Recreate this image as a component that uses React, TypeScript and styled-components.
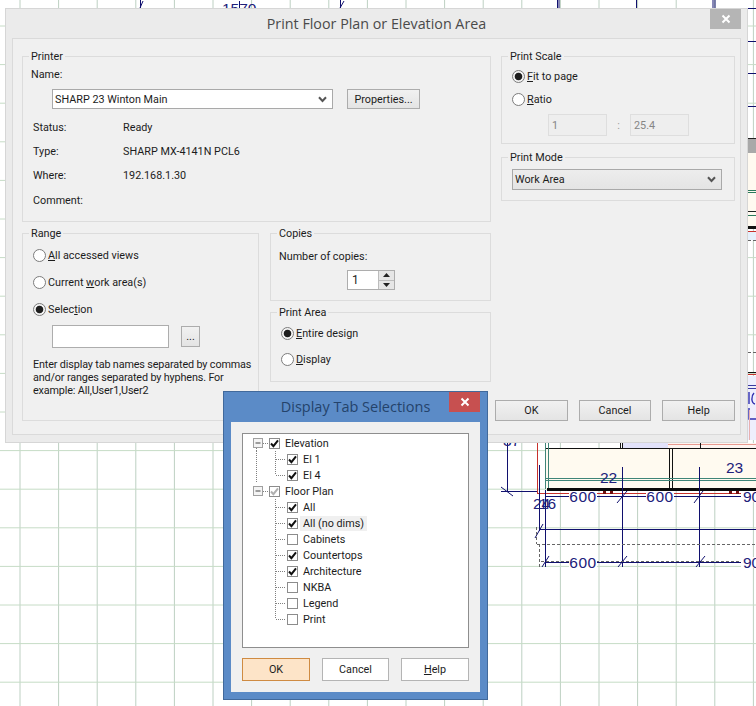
import React from 'react';
import styled, { createGlobalStyle } from 'styled-components';

const GlobalStyle = createGlobalStyle`
  html, body {
    margin: 0;
    padding: 0;
    background: #fff;
    overflow: hidden;
  }
  * {
    box-sizing: border-box;
  }
`;

const UI_FONT = `Roboto, "Liberation Sans", sans-serif`;
const CAD_FONT = `"Liberation Sans", Arial, sans-serif`;
const TITLE_FONT = `"Open Sans", "Noto Sans", sans-serif`;

const Desktop = styled.div`
  position: relative;
  width: 756px;
  height: 706px;
  overflow: hidden;
  background: #fff;
  font-family: ${UI_FONT};
  font-size: 10.8px;
  color: #1c1c1c;
`;

const Drawing = styled.svg`
  position: absolute;
  left: 0;
  top: 0;
`;

/* ---- windows ---- */

const PrintWindow = styled.div`
  position: absolute;
  left: 5px;
  top: 8px;
  width: 743px;
  height: 435px;
  display: flex;
  flex-direction: column;
  background: #ebebeb;
  border: 1px solid #d6d6d6;
  padding: 0 6px 7px;
`;

const TitleBar = styled.div<{ $height: number }>`
  position: relative;
  flex: none;
  height: ${(p) => p.$height}px;
  display: flex;
  align-items: center;
  justify-content: center;
`;

const PrintTitle = styled.div`
  font-family: ${TITLE_FONT};
  font-size: 14.3px;
  color: #4a4a4a;
`;

const CloseButton = styled.div<{ $bg: string }>`
  position: absolute;
  right: 0;
  top: 0;
  width: 31px;
  height: 20px;
  display: flex;
  align-items: center;
  justify-content: center;
  background: ${(p) => p.$bg};
`;

const PrintBody = styled.div`
  flex: 1;
  display: flex;
  gap: 10px;
  background: #f0f0f0;
  border: 1px solid #dadada;
  padding: 10px 5px 13px 9px;
`;

const LeftColumn = styled.div`
  width: 470px;
  display: flex;
  flex-direction: column;
  gap: 4px;
`;

const RightColumn = styled.div`
  width: 234px;
  display: flex;
  flex-direction: column;
  gap: 6px;
`;

const LowerRow = styled.div`
  display: flex;
  gap: 11px;
`;

const Stack = styled.div`
  flex: 1;
  display: flex;
  flex-direction: column;
  gap: 4px;
`;

const Group = styled.fieldset<{ $height: number; $width?: number }>`
  margin: 0;
  padding: 0 8px;
  min-width: 0;
  height: ${(p) => p.$height}px;
  width: ${(p) => (p.$width ? `${p.$width}px` : 'auto')};
  border: 1px solid #dcdcdc;
`;

const GroupLabel = styled.legend`
  margin-left: -2px;
  padding: 0 2px;
  height: 14px;
  line-height: 16px;
`;

/* ---- printer group ---- */

const NameLabel = styled.div`
  margin-top: 5px;
  height: 14px;
  line-height: 14px;
`;

const NameRow = styled.div`
  margin: 7px 0 0 21px;
  display: flex;
  gap: 14px;
`;

const Select = styled.div<{ $width: number; $height: number; $flat?: boolean }>`
  width: ${(p) => p.$width}px;
  height: ${(p) => p.$height}px;
  display: flex;
  align-items: center;
  justify-content: space-between;
  padding: 0 5px 0 2px;
  background: ${(p) => (p.$flat ? 'linear-gradient(#ededed, #e4e4e4)' : '#fff')};
  border: 1px solid #a9a9a9;
  white-space: nowrap;
`;

const WinButton = styled.button<{ $width: number; $height: number; $look?: 'plain' | 'default' }>`
  width: ${(p) => p.$width}px;
  height: ${(p) => p.$height}px;
  padding: 0;
  font: inherit;
  color: inherit;
  border: 1px solid ${(p) => (p.$look === 'default' ? '#cf8b42' : p.$look === 'plain' ? '#b4b4b4' : '#acacac')};
  background: ${(p) =>
    p.$look === 'default' ? '#fde4c8' : p.$look === 'plain' ? '#fff' : 'linear-gradient(#f1f1f1, #e4e4e4)'};
`;

const InfoGrid = styled.dl`
  margin: 6px 0 0 2px;
  display: grid;
  grid-template-columns: 90px 1fr;
  grid-auto-rows: 24.3px;
  align-items: center;
`;

const InfoTerm = styled.dt`
  margin: 0;
`;

const InfoValue = styled.dd`
  margin: 0;
`;

/* ---- radios ---- */

const RadioList = styled.div<{ $top: number; $gap: number }>`
  margin: ${(p) => p.$top}px 0 0 2px;
  display: flex;
  flex-direction: column;
  gap: ${(p) => p.$gap}px;
`;

const RadioRow = styled.div`
  height: 20px;
  display: flex;
  align-items: center;
  gap: 2px;
`;

const RadioCircle = styled.span<{ $on?: boolean }>`
  flex: none;
  width: 13px;
  height: 13px;
  border-radius: 50%;
  border: 1px solid #7c7c7c;
  background: ${(p) => (p.$on ? 'radial-gradient(circle, #1e1e1e 0 3.4px, #f4f4f4 4.2px)' : '#fff')};
`;

const Radio = ({ on, children }: { on?: boolean; children: React.ReactNode }) => (
  <RadioRow>
    <RadioCircle $on={on} />
    <span>{children}</span>
  </RadioRow>
);

const Mnemonic = styled.u`
  text-underline-offset: 1px;
`;

/* ---- range group ---- */

const SelectionRow = styled.div`
  margin: 6px 0 0 21px;
  display: flex;
  align-items: center;
  gap: 12px;
`;

const TextBox = styled.div<{ $width: number; $height: number; $disabled?: boolean }>`
  width: ${(p) => p.$width}px;
  height: ${(p) => p.$height}px;
  display: flex;
  align-items: center;
  padding-left: 3px;
  background: ${(p) => (p.$disabled ? '#eeeeee' : '#fff')};
  border: 1px solid ${(p) => (p.$disabled ? '#dedede' : '#adadad')};
  color: ${(p) => (p.$disabled ? '#858585' : 'inherit')};
`;

const Hint = styled.p`
  margin: 10px 0 0 2px;
  line-height: 13px;
  letter-spacing: -0.14px;
  white-space: nowrap;
`;

/* ---- copies ---- */

const CopiesLabel = styled.div`
  margin-top: 10px;
  height: 14px;
  line-height: 14px;
`;

const Spinner = styled.div`
  margin: 6px 0 0 68px;
  width: 48px;
  height: 20px;
  display: flex;
  background: #fff;
  border: 1px solid #adadad;
`;

const SpinValue = styled.div`
  flex: 1;
  padding-left: 4px;
  line-height: 18px;
  font-size: 12px;
`;

const SpinArrows = styled.div`
  width: 16px;
  display: flex;
  flex-direction: column;
  background: #e6e6e6;
  border-left: 1px solid #bcbcbc;
`;

const SpinHalf = styled.div`
  flex: 1;
  display: flex;
  align-items: center;
  justify-content: center;
  & + & {
    border-top: 1px solid #bcbcbc;
  }
`;

/* ---- print scale ---- */

const RatioRow = styled.div`
  margin: 5px 0 0 38px;
  display: flex;
  align-items: center;
  width: 141px;
  justify-content: space-between;
`;

const RatioColon = styled.span`
  color: #9a9a9a;
`;

const ModeRow = styled.div`
  margin-top: 5px;
  margin-left: 2px;
`;

const ActionRow = styled.div`
  margin: auto 0 0 -6px;
  display: flex;
  gap: 11px;
`;

/* ---- tab selection window ---- */

const TabWindow = styled.div`
  position: absolute;
  left: 223px;
  top: 391px;
  width: 265px;
  height: 309px;
  display: flex;
  flex-direction: column;
  background: #5b8bc7;
  border: 1px solid #41699b;
  padding: 0 7px 7px;
`;

const TabTitle = styled.div`
  font-family: ${TITLE_FONT};
  font-size: 14.5px;
  color: #24436b;
  padding-bottom: 1px;
`;

const TabBody = styled.div`
  flex: 1;
  display: flex;
  flex-direction: column;
  gap: 10px;
  background: #f0f0f0;
  padding: 11px;
`;

const TreeBox = styled.div`
  flex: 1;
  padding: 1px 0 0 10px;
  background: #fff;
  border: 1px solid #8e8e8e;
`;

const TreeRow = styled.div`
  height: 16px;
  display: flex;
  align-items: center;
`;

const Guides = styled.svg`
  flex: none;
  display: block;
`;

const CheckFrame = styled.span`
  flex: none;
  width: 11px;
  height: 11px;
  display: flex;
  align-items: center;
  justify-content: center;
  background: #fff;
  border: 1px solid #8c8c8c;
`;

const TreeText = styled.span<{ $hot?: boolean }>`
  margin-left: 2px;
  padding: 1px 3px;
  background: ${(p) => (p.$hot ? '#f0f0f0' : 'transparent')};
  white-space: nowrap;
`;

const TabActions = styled.div`
  display: flex;
  justify-content: space-between;
`;

/* ---- small drawings ---- */

const CrossIcon = () => (
  <svg width="10" height="10" viewBox="0 0 10 10">
    <path d="M1.5 1.5l7 7M8.5 1.5l-7 7" stroke="#fff" strokeWidth="2" />
  </svg>
);

const Chevron = () => (
  <svg width="9" height="7" viewBox="0 0 9 7">
    <path d="M1 1.2l3.5 3.8L8 1.2" fill="none" stroke="#555" strokeWidth="2" />
  </svg>
);

const SpinArrow = ({ up }: { up?: boolean }) => (
  <svg width="7" height="4" viewBox="0 0 7 4">
    <path d={up ? 'M3.5 0L7 4H0z' : 'M0 0h7L3.5 4z'} fill="#222" />
  </svg>
);

const Check = ({ disabled }: { disabled?: boolean }) => (
  <svg width="9" height="9" viewBox="0 0 9 9">
    <path d="M1 4.5l2.4 2.6L8 1.4" fill="none" stroke={disabled ? '#b0b0b0' : '#111'} strokeWidth="2" />
  </svg>
);

const dots = { stroke: '#808080', strokeDasharray: '1 1', fill: 'none' };

const ParentGuide = ({ last }: { last?: boolean }) => (
  <Guides width="16" height="16">
    <rect x="0.5" y="3.5" width="9" height="9" fill="#f4f4f4" stroke="#a0a0a0" />
    <path d="M2.5 8h5" stroke="#444" />
    <path d="M10 8.5h5" {...dots} />
    {!last && <path d="M3.5 13v3" {...dots} />}
  </Guides>
);

const ChildGuide = ({ trunk, end }: { trunk?: boolean; end?: boolean }) => (
  <Guides width="34" height="16">
    {trunk && <path d="M3.5 0v16" {...dots} />}
    <path d={end ? 'M22.5 0v8' : 'M22.5 0v16'} {...dots} />
    <path d="M23 8.5h9" {...dots} />
  </Guides>
);

/* ---- background CAD sheet ---- */

const NAVY = '#10106e';
const gridXs = Array.from({ length: 20 }, (_, i) => 20 + i * 38.6);
const gridYs = Array.from({ length: 18 }, (_, i) => 26 + i * 38.6);

const Dim = styled.text`
  font-family: ${CAD_FONT};
  font-size: 15.5px;
  fill: #20207a;
`;

const Dim600 = ({ x, y }: { x: number; y: number }) => (
  <>
    <rect x={x - 14} y={y - 5} width={28} height={11} fill="#fff" />
    <Dim x={x} y={y + 6} textAnchor="middle" letterSpacing="0.5">600</Dim>
  </>
);

const CadSheet = () => (
  <Drawing width="756" height="706">
    {gridXs.map((x) => (
      <line key={x} x1={x} x2={x} y1={0} y2={706} stroke="#bdd0c2" />
    ))}
    {gridYs.map((y) => (
      <line key={y} x1={0} x2={756} y1={y} y2={y} stroke="#c6dcc6" />
    ))}

    {/* stubs above the print window */}
    <path d="M140.5 0v8M140 8l3-7M340.5 0v8M340 8l4-7M557.5 0v8M559 0v8M636.5 0v8M713 0v8M715 0v8M239.5 1v7" stroke={NAVY} />
    <Dim x={222} y={14} fontSize="15">1570</Dim>

    {/* right edge behind the window */}
    <path d="M748 8.5h8M748 41.5h8M748 73.5h8M748 106.5h8" stroke={NAVY} />
    <rect x="748" y="138" width="8" height="15" fill="#a9a9a9" />
    <path d="M748 138.5h8" stroke="#222" />
    <rect x="748" y="153" width="8" height="73" fill="#fffaf0" />
    <path d="M748 190.5h8M748 192.5h8M748 215.5h8" stroke="#2b7a5c" />
    <path d="M748 211.5h8" stroke="#222" />
    <rect x="748" y="226" width="8" height="3" fill="#111" />
    <path d="M748 231.5h8" stroke="#c8322c" />
    <rect x="748" y="232" width="8" height="8" fill="#e6f0fb" />
    <path d="M748 240.5h8M748 352.5h8" stroke="#666" strokeDasharray="3 2" />
    <rect x="748" y="376" width="8" height="64" fill="#eeeefc" />
    <path d="M748 372.5h8" stroke="#111" />
    <path d="M748 374.5h8" stroke="#c8322c" />
    <path d="M748 385.5h8M748 388.5h8" stroke="#3a3aa0" />
    <path d="M749 392v12M754 393c-3 3-3 10 1 11M749 408v11h7" fill="none" stroke="#3030b0" strokeWidth="1.4" />
    <path d="M749.5 410v30" stroke="#e8b0b0" />

    {/* cabinet run */}
    <rect x="622" y="443" width="46" height="5" fill="#e2e2fa" />
    <rect x="668" y="443" width="88" height="5" fill="#fdf4f0" />
    <path d="M668 444.5h88" stroke="#e89a90" />
    <rect x="546" y="448" width="210" height="41" fill="#fffaf0" />
    <path d="M546 448.5h210" stroke="#111" />
    <path d="M620.5 443v5M622.5 443v5M700.5 443v5M669.5 448v41M672.5 448v41" stroke="#111" />
    <path d="M546 478.5h210M546 480.5h210" stroke="#3f8578" />
    <path d="M545.5 443v46M548.5 443v46" stroke="#3f8578" />
    <path d="M537.5 443v50M537 493.5h219" stroke="#c8322c" />
    <rect x="547" y="488" width="209" height="3" fill="#0a0a0a" />
    {[603, 610, 729, 736].map((x) => (
      <rect key={x} x={x} y={491} width={3} height={3} fill="#701010" />
    ))}

    {/* dimension lines */}
    <path
      d="M507.5 443v48M501 491.5h36M622.5 467v100M699.5 467v100M545.5 490v77M539.5 465v66M545 496.5h211M539 529.5h217M545 562.5h211"
      stroke={NAVY}
    />
    <path
      d="M501 487l12 9M617 503l10-12M694 503l9-12M535 538l8-14M542 567l7-11M618 567l9-11M696 567l9-11"
      stroke={NAVY}
    />
    <path d="M537 544.5h219M541 561.5h215M536.5 527v17M539.5 544v23" stroke="#666" strokeDasharray="3 2" />
    <Dim600 x={583} y={496} />
    <Dim600 x={660} y={496} />
    <Dim600 x={583} y={562} />
    <rect x="741" y="491" width="15" height="11" fill="#fff" />
    <rect x="741" y="557" width="15" height="11" fill="#fff" />
    <Dim x={743} y={502}>90</Dim>
    <Dim x={743} y={568}>90</Dim>
    <Dim x={600} y={483} fontSize="13.5">22</Dim>
    <Dim x={726} y={473} fontSize="13.5">23</Dim>
    <Dim x={533} y={509} fontSize="13.5">24</Dim>
    <Dim x={539} y={509} fontSize="13.5">16</Dim>
    <Dim x={503} y={446} fontSize="13.5">37</Dim>
  </Drawing>
);

/* ---- data ---- */

const elevationTabs = [
  { name: 'El 1', on: true },
  { name: 'El 4', on: true },
];

const floorPlanTabs = [
  { name: 'All', on: true },
  { name: 'All (no dims)', on: true, hot: true },
  { name: 'Cabinets', on: false },
  { name: 'Countertops', on: true },
  { name: 'Architecture', on: true },
  { name: 'NKBA', on: false },
  { name: 'Legend', on: false },
  { name: 'Print', on: false },
];

export default function App() {
  return (
    <Desktop>
      <GlobalStyle />
      <CadSheet />

      <PrintWindow>
        <TitleBar $height={29}>
          <PrintTitle>Print Floor Plan or Elevation Area</PrintTitle>
          <CloseButton $bg="#b5b5b5">
            <CrossIcon />
          </CloseButton>
        </TitleBar>

        <PrintBody>
          <LeftColumn>
            <Group $height={173}>
              <GroupLabel>Printer</GroupLabel>
              <NameLabel>Name:</NameLabel>
              <NameRow>
                <Select $width={281} $height={20}>
                  SHARP 23 Winton Main
                  <Chevron />
                </Select>
                <WinButton $width={73} $height={20}>Properties...</WinButton>
              </NameRow>
              <InfoGrid>
                <InfoTerm>Status:</InfoTerm>
                <InfoValue>Ready</InfoValue>
                <InfoTerm>Type:</InfoTerm>
                <InfoValue>SHARP MX-4141N PCL6</InfoValue>
                <InfoTerm>Where:</InfoTerm>
                <InfoValue>192.168.1.30</InfoValue>
                <InfoTerm>Comment:</InfoTerm>
                <InfoValue />
              </InfoGrid>
            </Group>

            <LowerRow>
              <Group $height={195} $width={237}>
                <GroupLabel>Range</GroupLabel>
                <RadioList $top={5} $gap={7}>
                  <Radio><Mnemonic>A</Mnemonic>ll accessed views</Radio>
                  <Radio>Current <Mnemonic>w</Mnemonic>ork area(s)</Radio>
                  <Radio on>Selec<Mnemonic>t</Mnemonic>ion</Radio>
                </RadioList>
                <SelectionRow>
                  <TextBox $width={117} $height={23} />
                  <WinButton $width={19} $height={21}>...</WinButton>
                </SelectionRow>
                <Hint>
                  Enter display tab names separated by commas
                  <br />
                  and/or ranges separated by hyphens. For
                  <br />
                  example: All,User1,User2
                </Hint>
              </Group>

              <Stack>
                <Group $height={75}>
                  <GroupLabel>Copies</GroupLabel>
                  <CopiesLabel>Number of copies:</CopiesLabel>
                  <Spinner>
                    <SpinValue>1</SpinValue>
                    <SpinArrows>
                      <SpinHalf><SpinArrow up /></SpinHalf>
                      <SpinHalf><SpinArrow /></SpinHalf>
                    </SpinArrows>
                  </Spinner>
                </Group>
                <Group $height={77}>
                  <GroupLabel>Print Area</GroupLabel>
                  <RadioList $top={4} $gap={6}>
                    <Radio on><Mnemonic>E</Mnemonic>ntire design</Radio>
                    <Radio><Mnemonic>D</Mnemonic>isplay</Radio>
                  </RadioList>
                </Group>
              </Stack>
            </LowerRow>
          </LeftColumn>

          <RightColumn>
            <Group $height={95}>
              <GroupLabel>Print Scale</GroupLabel>
              <RadioList $top={3} $gap={3}>
                <Radio on><Mnemonic>F</Mnemonic>it to page</Radio>
                <Radio><Mnemonic>R</Mnemonic>atio</Radio>
              </RadioList>
              <RatioRow>
                <TextBox $width={59} $height={22} $disabled>1</TextBox>
                <RatioColon>:</RatioColon>
                <TextBox $width={59} $height={22} $disabled>25.4</TextBox>
              </RatioRow>
            </Group>
            <Group $height={51}>
              <GroupLabel>Print Mode</GroupLabel>
              <ModeRow>
                <Select $width={210} $height={21} $flat>
                  Work Area
                  <Chevron />
                </Select>
              </ModeRow>
            </Group>
            <ActionRow>
              <WinButton $width={73} $height={21}>OK</WinButton>
              <WinButton $width={73} $height={21}>Cancel</WinButton>
              <WinButton $width={73} $height={21}>Help</WinButton>
            </ActionRow>
          </RightColumn>
        </PrintBody>
      </PrintWindow>

      <TabWindow>
        <TitleBar $height={30}>
          <TabTitle>Display Tab Selections</TabTitle>
          <CloseButton $bg="#c75050">
            <CrossIcon />
          </CloseButton>
        </TitleBar>
        <TabBody>
          <TreeBox>
            <TreeRow>
              <ParentGuide />
              <CheckFrame><Check /></CheckFrame>
              <TreeText>Elevation</TreeText>
            </TreeRow>
            {elevationTabs.map((tab, i) => (
              <TreeRow key={tab.name}>
                <ChildGuide trunk end={i === elevationTabs.length - 1} />
                <CheckFrame>{tab.on && <Check />}</CheckFrame>
                <TreeText>{tab.name}</TreeText>
              </TreeRow>
            ))}
            <TreeRow>
              <ParentGuide last />
              <CheckFrame><Check disabled /></CheckFrame>
              <TreeText>Floor Plan</TreeText>
            </TreeRow>
            {floorPlanTabs.map((tab, i) => (
              <TreeRow key={tab.name}>
                <ChildGuide end={i === floorPlanTabs.length - 1} />
                <CheckFrame>{tab.on && <Check />}</CheckFrame>
                <TreeText $hot={tab.hot}>{tab.name}</TreeText>
              </TreeRow>
            ))}
          </TreeBox>
          <TabActions>
            <WinButton $width={68} $height={23} $look="default">OK</WinButton>
            <WinButton $width={67} $height={23} $look="plain">Cancel</WinButton>
            <WinButton $width={68} $height={23} $look="plain"><Mnemonic>H</Mnemonic>elp</WinButton>
          </TabActions>
        </TabBody>
      </TabWindow>
    </Desktop>
  );
}
